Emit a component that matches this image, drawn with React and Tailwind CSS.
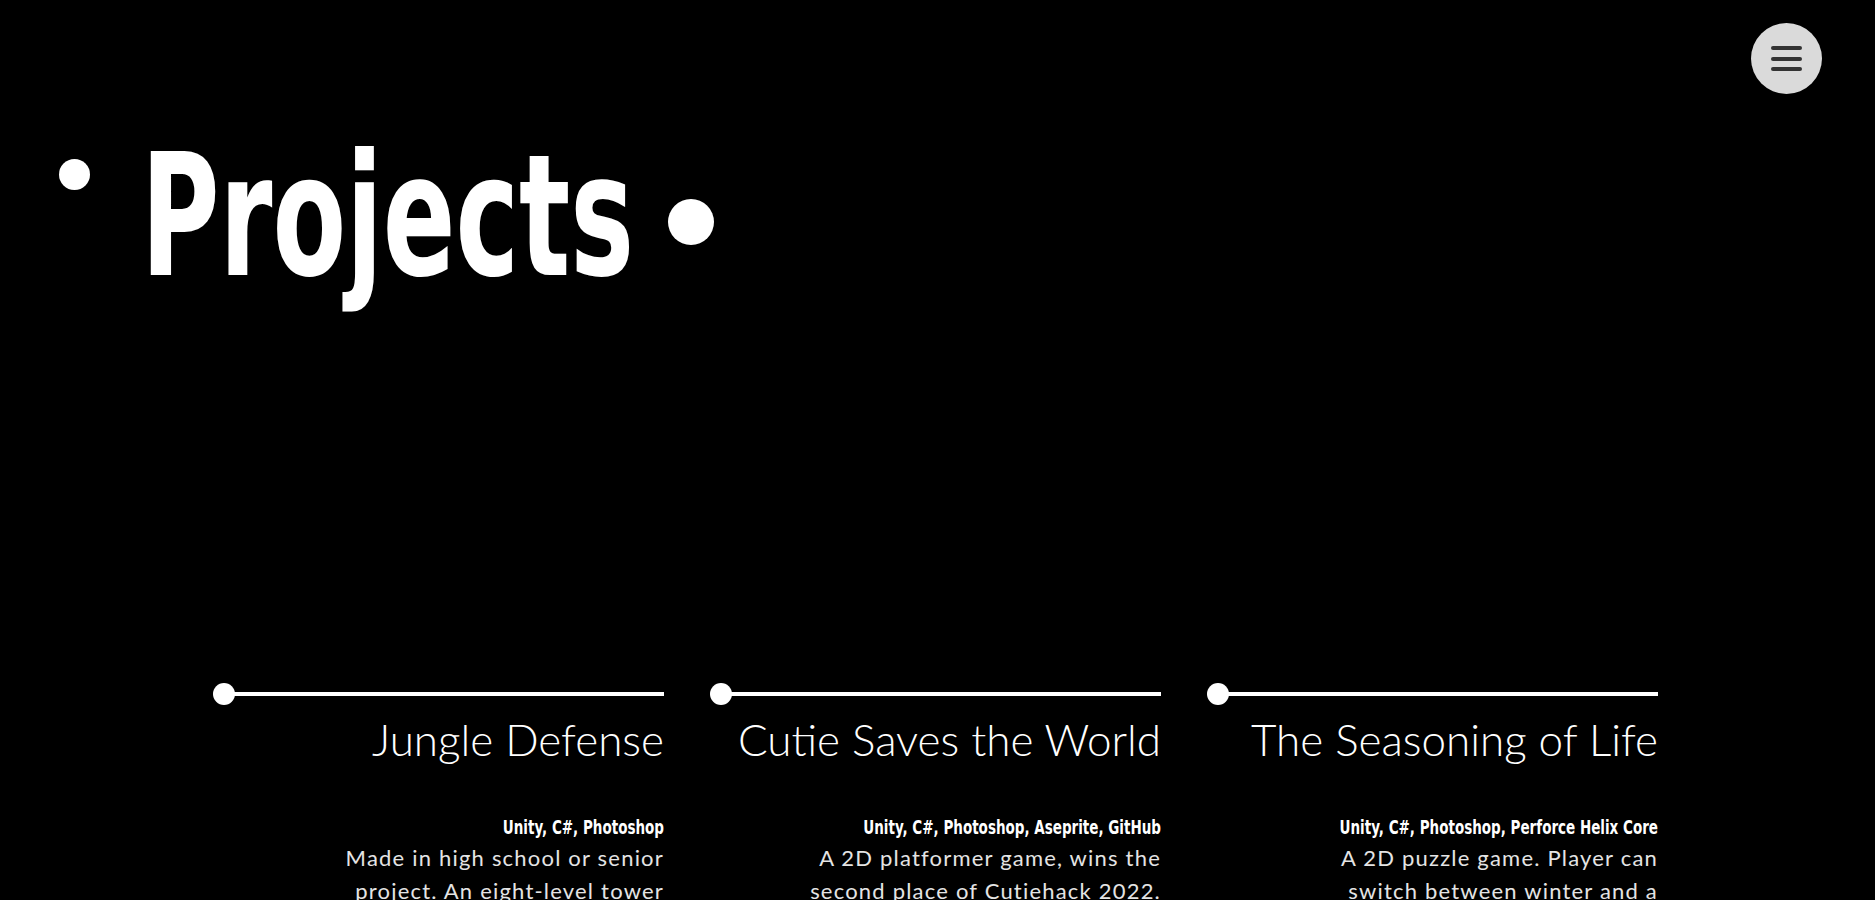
import React from 'react';

const projects = [
  {
    title: 'Jungle Defense',
    tags: 'Unity, C#, Photoshop',
    text: 'Made in high school or senior project. An eight-level tower defense game where the player protects the jungle from invaders.',
  },
  {
    title: 'Cutie Saves the World',
    tags: 'Unity, C#, Photoshop, Aseprite, GitHub',
    text: 'A 2D platformer game, wins the second place of Cutiehack 2022. Made in 24 hours with a team of four.',
  },
  {
    title: 'The Seasoning of Life',
    tags: 'Unity, C#, Photoshop, Perforce Helix Core',
    text: 'A 2D puzzle game. Player can switch between winter and a summer world to solve the puzzles of each level.',
  },
];

const condensed = { fontFamily: '"DejaVu Sans Condensed", "Liberation Sans", sans-serif' };
const light = { fontFamily: 'Lato, "Noto Sans", sans-serif' };

const ProjectCard = ({ title, tags, text }) => (
  <div className="w-[451px] flex flex-col items-end text-right">
    {/* timeline bar */}
    <div className="w-full flex items-center">
      <span className="w-[22px] h-[22px] rounded-full bg-white shrink-0" />
      <span className="flex-1 h-[4px] bg-white -ml-[2px]" />
    </div>
    <h2 className="mt-[8px] text-[44px] leading-[52px] font-light text-white whitespace-nowrap" style={light}>
      {title}
    </h2>
    <p
      className="mt-[50px] w-full text-[20px] leading-[24px] font-bold text-white whitespace-nowrap origin-right scale-x-[0.75]"
      style={condensed}
    >
      {tags}
    </p>
    <p className="mt-[2px] w-[370px] text-[22px] leading-[33px] font-normal tracking-[1.2px] text-[#e4e4e4]" style={light}>
      {text}
    </p>
  </div>
);

const App = () => {
  return (
    <div className="min-h-screen bg-black text-white overflow-hidden">
      {/* menu button */}
      <button
        className="fixed top-[23px] right-[53px] w-[71px] h-[71px] rounded-full bg-[#dadada] flex flex-col items-center justify-center gap-[6.5px]"
        aria-label="Menu"
      >
        <span className="w-[31px] h-[4px] rounded-full bg-[#333333]" />
        <span className="w-[31px] h-[4px] rounded-full bg-[#333333]" />
        <span className="w-[31px] h-[4px] rounded-full bg-[#333333]" />
      </button>

      {/* heading */}
      <header className="flex items-start pl-[59px] pt-[131px]">
        <span className="mt-[28px] w-[31px] h-[31px] rounded-full bg-white shrink-0" />
        <h1
          className="ml-[51px] w-[488px] text-[170px] leading-none font-bold whitespace-nowrap origin-left scale-x-[0.701]"
          style={condensed}
        >
          Projects
        </h1>
        <span className="ml-[39px] mt-[68px] w-[46px] h-[46px] rounded-full bg-white shrink-0" />
      </header>

      {/* project list */}
      <section className="mt-[382px] pl-[213px] flex gap-[46px]">
        {projects.map((p) => (
          <ProjectCard key={p.title} {...p} />
        ))}
      </section>
    </div>
  );
};

export default App;
